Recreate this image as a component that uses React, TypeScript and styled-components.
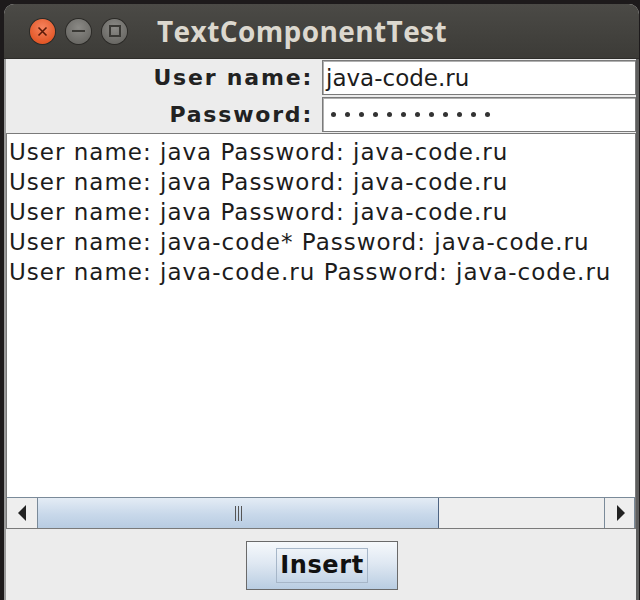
import React from "react";
import styled, { createGlobalStyle } from "styled-components";

const GlobalStyle = createGlobalStyle`
  html, body {
    margin: 0;
    padding: 0;
    background: #1d1a1b;
    width: 640px;
    height: 600px;
    overflow: hidden;
  }
`;

const Window = styled.div`
  margin: 4px 0 0 4px;
  width: 635px;
  height: 596px;
  display: flex;
  flex-direction: column;
  background: #ececec;
  border-radius: 10px 10px 0 0;
  overflow: hidden;
`;

const TitleBar = styled.div`
  height: 54px;
  flex: none;
  display: flex;
  align-items: center;
  padding-left: 26px;
  background: linear-gradient(#4b4a46, #3c3b37);
  border-bottom: 1px solid #2e2d2a;
`;

const WinButton = styled.div<{ $kind: "close" | "min" | "max" }>`
  width: 25px;
  height: 25px;
  border-radius: 50%;
  margin-right: 11px;
  display: flex;
  align-items: center;
  justify-content: center;
  background: ${(p) =>
    p.$kind === "close"
      ? "radial-gradient(circle at 50% 35%, #f5835e, #dd4814)"
      : "radial-gradient(circle at 50% 35%, #8b8a86, #5f5e5a)"};
  box-shadow: 0 0 0 1px #2b2a27;
`;

const Title = styled.div`
  margin-left: 19px;
  font-family: "Open Sans", "DejaVu Sans", sans-serif;
  font-weight: 700;
  font-size: 28px;
  color: #dcd8cf;
  letter-spacing: 0.4px;
`;

const Content = styled.div`
  flex: 1;
  display: flex;
  flex-direction: column;
  border-left: 2px solid #9a9a9a;
  border-right: 3px solid #5e5e5e;
`;

const Form = styled.div`
  display: grid;
  grid-template-columns: 316px 1fr;
  row-gap: 2px;
  padding-top: 1px;
`;

const Label = styled.div`
  font-family: "DejaVu Sans", sans-serif;
  font-weight: 700;
  font-size: 22px;
  color: #222;
  text-align: right;
  padding-right: 9px;
  height: 35px;
  line-height: 35px;
  letter-spacing: 1.8px;
`;

const Field = styled.div`
  height: 33px;
  display: flex;
  align-items: center;
  background: #fff;
  border: 1px solid #7a7a7a;
  box-shadow: inset 1px 1px 0 #b0b0b0;
  padding-left: 3px;
  font-family: "DejaVu Sans", sans-serif;
  font-size: 23px;
  color: #1c1c1c;
`;

const Dots = styled.div`
  display: flex;
  gap: 9px;
  padding-left: 5px;
`;

const Dot = styled.span`
  width: 5px;
  height: 5px;
  border-radius: 50%;
  background: #333;
`;

const ScrollPane = styled.div`
  flex: none;
  height: 394px;
  margin-top: 1px;
  border: 1px solid #7a7a7a;
  display: flex;
  flex-direction: column;
  background: #fff;
`;

const TextArea = styled.div`
  flex: 1;
  padding: 3px 0 0 2px;
  font-family: "DejaVu Sans", sans-serif;
  font-size: 23px;
  letter-spacing: 1px;
  line-height: 30px;
  color: #1c1c1c;
  white-space: pre;
  overflow: hidden;
`;

const HScroll = styled.div`
  height: 30px;
  flex: none;
  display: flex;
  background: #eeeeee;
  border-top: 1px solid #7a8a99;
  padding-left: 1px;
`;

const ArrowButton = styled.div<{ $side: "left" | "right" }>`
  width: 29px;
  display: flex;
  align-items: center;
  justify-content: center;
  background: #eeeeee;
  border-left: ${(p) => (p.$side === "right" ? "1px solid #7a8a99" : "none")};
  border-right: 1px solid #7a8a99;
`;

const Track = styled.div`
  flex: 1;
  display: flex;
`;

const Thumb = styled.div`
  width: 400px;
  display: flex;
  align-items: center;
  justify-content: center;
  background: linear-gradient(#e4ecf5, #c8d8ea 55%, #b8cce2);
  border-right: 1px solid #4e6483;
`;

const Grip = styled.div`
  width: 7px;
  height: 15px;
  background: repeating-linear-gradient(
    90deg,
    #555 0,
    #555 1px,
    transparent 1px,
    transparent 3px
  );
`;

const Footer = styled.div`
  flex: 1;
  display: flex;
  justify-content: center;
  align-items: flex-start;
  padding-top: 12px;
  padding-left: 2px;
`;

const Button = styled.button`
  width: 152px;
  height: 49px;
  border: 1px solid #6a6a6a;
  background: linear-gradient(#f6f9fc, #dfe8f2 45%, #b9cde2);
  display: flex;
  align-items: center;
  justify-content: center;
  padding: 0;
`;

const Focus = styled.span`
  border: 1px solid #a6b6c8;
  padding: 0 3px;
  font-family: "DejaVu Sans", sans-serif;
  font-weight: 700;
  font-size: 24px;
  letter-spacing: 0.6px;
  line-height: 33px;
  color: #111;
`;

const lines = [
  "User name: java Password: java-code.ru",
  "User name: java Password: java-code.ru",
  "User name: java Password: java-code.ru",
  "User name: java-code* Password: java-code.ru",
  "User name: java-code.ru Password: java-code.ru",
];

const Triangle = ({ dir }: { dir: "left" | "right" }) => (
  <svg width="10" height="16" viewBox="0 0 10 16">
    {dir === "left" ? (
      <polygon points="8,0 8,16 0,8" fill="#222" />
    ) : (
      <polygon points="2,0 2,16 10,8" fill="#222" />
    )}
  </svg>
);

export default function App() {
  return (
    <>
      <GlobalStyle />
      <Window>
        <TitleBar>
          <WinButton $kind="close">
            <svg width="11" height="11" viewBox="0 0 11 11">
              <path d="M1.5 1.5 L9.5 9.5 M9.5 1.5 L1.5 9.5" stroke="#5a1a08" strokeWidth="1.6" />
            </svg>
          </WinButton>
          <WinButton $kind="min">
            <svg width="13" height="4" viewBox="0 0 13 4">
              <rect x="0" y="1" width="13" height="2" fill="#3a3935" />
            </svg>
          </WinButton>
          <WinButton $kind="max">
            <svg width="12" height="12" viewBox="0 0 12 12">
              <rect x="1" y="1" width="10" height="10" fill="none" stroke="#3a3935" strokeWidth="2" />
            </svg>
          </WinButton>
          <Title>TextComponentTest</Title>
        </TitleBar>
        <Content>
          <Form>
            <Label>User name:</Label>
            <Field>java-code.ru</Field>
            <Label>Password:</Label>
            <Field>
              <Dots>
                {Array.from({ length: 12 }, (_, i) => (
                  <Dot key={i} />
                ))}
              </Dots>
            </Field>
          </Form>
          <ScrollPane>
            <TextArea>{lines.join("\n")}</TextArea>
            <HScroll>
              <ArrowButton $side="left">
                <Triangle dir="left" />
              </ArrowButton>
              <Track>
                <Thumb>
                  <Grip />
                </Thumb>
              </Track>
              <ArrowButton $side="right">
                <Triangle dir="right" />
              </ArrowButton>
            </HScroll>
          </ScrollPane>
          <Footer>
            <Button>
              <Focus>Insert</Focus>
            </Button>
          </Footer>
        </Content>
      </Window>
    </>
  );
}
